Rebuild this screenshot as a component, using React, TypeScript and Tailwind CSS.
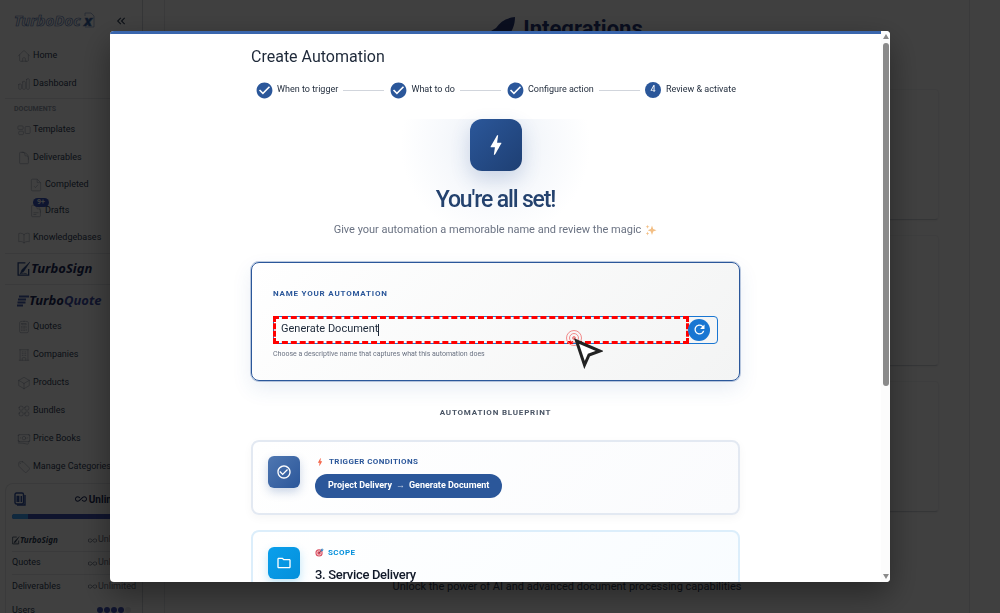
import React, { useState } from 'react';
import {
  HiOutlineHome,
  HiOutlineChartBar,
  HiOutlineDocument,
  HiOutlineDocumentText,
  HiOutlineBookOpen,
  HiOutlineCalculator,
  HiOutlineBuildingOffice,
  HiOutlineCube,
  HiOutlineSquares2X2,
  HiOutlineBanknotes,
  HiOutlineTag,
} from 'react-icons/hi2';
import {
  MdBolt,
  MdCheckCircle,
  MdCheckCircleOutline,
  MdOutlineFolder,
  MdRefresh,
  MdKeyboardDoubleArrowLeft,
  MdAllInclusive,
} from 'react-icons/md';

type IconComponent = React.ComponentType<React.SVGProps<SVGSVGElement>>;

interface NavItem {
  label: string;
  icon: IconComponent;
}

const TemplatesIcon: IconComponent = props => (
  <svg viewBox="0 0 24 24" fill="none" stroke="currentColor" {...props}>
    <rect x="1.500" y="5" width="9" height="6" rx="1.500" />
    <rect x="3" y="14" width="8" height="6" rx="1.500" />
    <rect x="14" y="6" width="8.500" height="12" rx="1.500" />
  </svg>
);

const DocumentCheckIcon: IconComponent = props => (
  <svg viewBox="0 0 24 24" fill="none" stroke="currentColor" {...props}>
    <path d="M14 2H6a2 2 0 0 0-2 2v16a2 2 0 0 0 2 2h12a2 2 0 0 0 2-2V8zM14 2v6h6M8.500 14l2.500 2.500 4.500-5" />
  </svg>
);

const topItems: NavItem[] = [
  { label: 'Home', icon: HiOutlineHome },
  { label: 'Dashboard', icon: HiOutlineChartBar },
];

const documentItems: NavItem[] = [
  { label: 'Templates', icon: TemplatesIcon },
  { label: 'Deliverables', icon: HiOutlineDocument },
];

const quoteItems: NavItem[] = [
  { label: 'Quotes', icon: HiOutlineCalculator },
  { label: 'Companies', icon: HiOutlineBuildingOffice },
  { label: 'Products', icon: HiOutlineCube },
  { label: 'Bundles', icon: HiOutlineSquares2X2 },
  { label: 'Price Books', icon: HiOutlineBanknotes },
  { label: 'Manage Categories', icon: HiOutlineTag },
];

const steps = ['When to trigger', 'What to do', 'Configure action', 'Review & activate'];

const NavLink: React.FC<NavItem> = ({ label, icon: Icon }) => (
  <a href="#" className="flex h-7 items-center gap-[2px] pl-[17px] text-[9px] whitespace-nowrap text-slate-700">
    <Icon className="size-[14px] shrink-0 text-gray-400" strokeWidth={1} />
    {label}
  </a>
);

const SubLink: React.FC<NavItem & { badge?: string }> = ({ label, icon: Icon, badge }) => (
  <a href="#" className="relative flex h-[26px] items-center gap-[2px] pl-[29px] text-[9px] whitespace-nowrap text-slate-700">
    <Icon className="size-[14px] shrink-0 text-gray-400" strokeWidth={1} />
    {label}
    {badge && (
      <span className="absolute top-0 left-[33px] rounded-full bg-[#3a56c0] px-1 text-[7px] leading-[9px] font-bold text-white">
        {badge}
      </span>
    )}
  </a>
);

const SignMark: React.FC<{ className?: string }> = ({ className }) => (
  <svg viewBox="0 0 15 16" className={className} fill="none" stroke="currentColor">
    <path d="M9 1.5H1.2v13h11.3V8" strokeWidth="1.4" />
    <path d="M13.8.5 5.2 8.8l-1.5 4 3.6-2.4z" fill="currentColor" strokeWidth="0.6" />
    <path d="M3 13.2c3-1 5-.8 7.5 0" strokeWidth="0.8" />
  </svg>
);

const Sidebar: React.FC = () => (
  <aside className="flex w-[143px] shrink-0 flex-col border-r border-gray-300">
    <div className="flex h-[42px] shrink-0 items-center justify-between pr-[14px] pl-[14px]">
      <svg viewBox="0 0 82 20" className="h-5 w-[82px]" aria-label="TurboDocx">
        <g fontFamily="Noto Sans" fontStyle="italic" fontWeight="700" fontSize="15" stroke="#5f80b8" strokeWidth="0.7">
          <text x="0" y="15" fill="none">TurboDoc</text>
          <text x="70" y="15" fill="#2b579a">x</text>
        </g>
        <path d="M71 5V2h6l3 3v11h-9" fill="none" stroke="#7f97c0" strokeWidth="0.7" />
      </svg>
      <button type="button" aria-label="Collapse sidebar" className="text-slate-700">
        <MdKeyboardDoubleArrowLeft className="size-[14px]" />
      </button>
    </div>
    <nav className="flex shrink-0 flex-col">
      {topItems.map(item => <NavLink key={item.label} {...item} />)}
      <p className="ml-[5px] h-[18px] border-t border-gray-200 pl-[9px] text-[7px] leading-[20px] font-bold text-gray-400">
        DOCUMENTS
      </p>
      {documentItems.map(item => <NavLink key={item.label} {...item} />)}
      <SubLink label="Completed" icon={DocumentCheckIcon} />
      <SubLink label="Drafts" icon={HiOutlineDocumentText} badge="9+" />
      <NavLink label="Knowledgebases" icon={HiOutlineBookOpen} />
      <a href="#" className="mt-px ml-[5px] flex h-8 items-center border-y border-gray-200 pl-3 font-['Noto_Sans'] text-[13px] font-bold text-[#1c2a58] italic">
        <SignMark className="h-4 w-[14px] text-[#2b4a8a]" />
        TurboSign
      </a>
      <a href="#" className="flex h-7 items-center pt-1 pl-[17px] font-['Noto_Sans'] text-[13px] font-bold text-[#1c2a58] italic">
        <svg viewBox="0 0 12 12" className="size-3 shrink-0" fill="none" stroke="#4a5fb0" strokeWidth="1.8">
          <path d="M2 1.5h10M1 4.5h8M.5 7.500h8M0 10.500h6" />
        </svg>
        Turbo<span className="text-[#3f4ea8]">Quote</span>
      </a>
      {quoteItems.map(item => <NavLink key={item.label} {...item} />)}
    </nav>
    <section className="mt-[2px] ml-[5px] shrink-0 rounded-tl-lg border-t border-l border-gray-200 px-[6px] text-[9px] text-slate-700">
      <div className="flex h-[30px] items-center justify-between text-[#1c2a58]">
        <svg viewBox="0 0 12 14" className="ml-[2px] h-[14px] w-3" fill="none" stroke="#3050a0" strokeWidth="1.4">
          <rect x="1" y="1" width="8.500" height="11" rx="1.500" />
          <path d="M3.200 10V4.500h1.500V10M3 7.500h2M7.300 4v6M11 3v10H3" />
        </svg>
        <span className="flex items-center gap-[2px] pr-1 text-[10px] font-bold">
          <MdAllInclusive className="size-3" />
          Unlimited
        </span>
      </div>
      <div className="flex h-[5px] overflow-hidden rounded-full bg-[#3f51b5]">
        <div className="w-4 bg-[#42a5f5]" />
      </div>
      <ul className="mt-[10px]">
        <li className="flex h-[23px] items-center justify-between border-b border-gray-200">
          <span className="flex items-center font-['Noto_Sans'] text-[8px] font-bold italic">
            <SignMark className="h-[9px] w-2" />
            TurboSign
          </span>
          <span className="flex items-center gap-px text-gray-500"><MdAllInclusive />Unlimited</span>
        </li>
        <li className="flex h-[23px] items-center justify-between border-b border-gray-200">
          Quotes
          <span className="flex items-center gap-px text-gray-500"><MdAllInclusive />Unlimited</span>
        </li>
        <li className="flex h-[23px] items-center justify-between">
          Deliverables
          <span className="flex items-center gap-px text-gray-500"><MdAllInclusive />Unlimited</span>
        </li>
        <li className="flex h-[23px] items-center justify-between leading-3">
          Users
          <span className="flex gap-px pr-[5px]">
            {[0, 1, 2, 3, 4].map(i => (
              <i key={i} className={i < 4 ? 'size-[6px] rounded-full bg-[#3f51b5]' : 'size-[6px] rounded-full bg-gray-200'} />
            ))}
          </span>
        </li>
      </ul>
    </section>
  </aside>
);

const IntegrationsPage: React.FC = () => (
  <div className="mr-[30px] ml-[21px] flex-1 border-x border-gray-200 px-[30px]">
    <h1 className="flex h-[56px] items-center justify-center gap-2 text-[22px] font-bold text-[#28397a]">
      <svg viewBox="0 0 24 24" className="size-6" fill="currentColor">
        <path d="M24 1C15 2 9 6 5 12l-5 3 7 1 3 5 5 2c5-6 9-12 9-22z" />
      </svg>
      Integrations
    </h1>
    <div className="mt-[33px] flex flex-col gap-[15px]">
      {[0, 1, 2].map(i => (
        <div key={i} className="h-[131px] rounded border border-gray-100 border-b-gray-300 shadow-xs" />
      ))}
    </div>
    <p className="mt-[67px] text-center text-[11px] leading-4 text-slate-700">
      Unlock the power of AI and advanced document processing capabilities
    </p>
  </div>
);

const Stepper: React.FC = () => (
  <ol className="mt-3 flex items-center px-1 text-[9px] text-gray-800">
    {steps.map((step, index) => (
      <React.Fragment key={step}>
        {index > 0 && <li aria-hidden="true" className="mx-[5px] h-px flex-1 bg-gray-300" />}
        {index < steps.length - 1 ? (
          <li className="flex items-center gap-[3px] whitespace-nowrap">
            <MdCheckCircle className="size-[19px] text-[#2b579a]" />
            {step}
          </li>
        ) : (
          <li className="flex items-center gap-[5px] whitespace-nowrap">
            <span className="flex size-4 items-center justify-center rounded-full bg-[#2b579a] text-[9px] text-white">
              {index + 1}
            </span>
            {step}
          </li>
        )}
      </React.Fragment>
    ))}
  </ol>
);

const Sparkles: React.FC = () => (
  <svg viewBox="0 0 12 12" className="size-3" fill="#f3bf85">
    <path d="M7 1.500 8.200 5l3.300 1.200L8.200 7.400 7 11 5.800 7.400 2.700 6.200 5.800 5z" />
    <path d="M2.500.8 3 2.300l1.500.5L3 3.300l-.5 1.500L2 3.300.6 2.800 2 2.300zM2.500 7.500 3 9l1.300.5L3 10l-.5 1.500L2 10 .8 9.500 2 9z" />
  </svg>
);

const TargetMark: React.FC = () => (
  <svg viewBox="0 0 10 10" className="size-[9px]" fill="none">
    <circle cx="4.500" cy="5.500" r="4" fill="#d94b5e" />
    <circle cx="4.500" cy="5.500" r="2.400" stroke="#fff" strokeWidth="0.8" />
    <path d="m4.500 5.500 3-3" stroke="#445" strokeWidth="0.8" />
    <path d="M6.500 3.500V1.800L8.200.2l.2 1.400 1.400.2-1.600 1.700z" fill="#3b88c3" />
  </svg>
);

const ReviewDialog: React.FC = () => {
  const [name, setName] = useState('Generate Document');

  return (
    <div
      role="dialog"
      aria-modal="true"
      aria-labelledby="dialog-title"
      className="flex h-[90vh] w-full max-w-[780px] overflow-hidden rounded-sm bg-white shadow-[0_12px_32px_rgba(0,0,0,0.4)]"
    >
      <div className="min-w-0 flex-1 overflow-hidden border-t-[3px] border-[#3a66ad]">
        <div className="mx-auto max-w-[489px]">
          <h2 id="dialog-title" className="pt-[11px] text-base leading-6 text-gray-800">Create Automation</h2>
          <Stepper />

          <div className="mt-[19px] flex flex-col items-center bg-[radial-gradient(circle_at_50%_26px,#eaeff6_0,#f7f9fc_55px,#ffffff_95px)] text-center">
            <div className="flex size-[52px] items-center justify-center rounded-xl bg-linear-135 from-[#2b579a] to-[#1e3f73] shadow-[0_8px_20px_rgba(43,87,154,0.2)]">
              <MdBolt className="size-[26px] text-white" />
            </div>
            <h3 className="mt-[13px] text-[23px] leading-8 font-medium tracking-tighter text-[#24426e]">You're all set!</h3>
            <p className="mt-1 flex items-center gap-1 text-[11px] leading-5 text-gray-500">
              Give your automation a memorable name and review the magic
              <Sparkles />
            </p>
          </div>

          <section className="relative mt-[22px] rounded-lg border border-[#2b579a] bg-linear-135 from-white to-[#f3f4f4] px-[21px] pt-[23px] pb-5 shadow-[0_8px_20px_rgba(43,87,154,0.1)] ring-1 ring-[#2b579a]/30">
            <label htmlFor="automation-name" className="block text-[8px] leading-4 font-bold tracking-widest text-[#2b579a]">
              NAME YOUR AUTOMATION
            </label>
            <div className="mt-[14px] flex h-7 items-stretch rounded border border-[#1976d2]">
              <div className="-m-px flex flex-1 items-center border-3 border-dashed border-[#ff0000] pl-[5px]">
                <input
                  id="automation-name"
                  value={name}
                  onChange={e => setName(e.target.value)}
                  className="[field-sizing:content] text-[11px] text-gray-800 outline-none"
                />
                <span className="h-3 w-px bg-gray-800" />
              </div>
              <div className="flex w-[29px] items-center">
                <button type="button" aria-label="Regenerate name" className="flex size-[22px] items-center justify-center rounded-full bg-[#1976d2] text-white">
                  <MdRefresh className="size-[15px]" />
                </button>
              </div>
            </div>
            <p className="mt-1 text-[7px] leading-3 text-gray-500">
              Choose a descriptive name that captures what this automation does
            </p>
            <svg viewBox="0 0 38 40" className="absolute top-[66px] left-[313px] h-10 w-[38px]" fill="none">
              <g stroke="#f28b8b">
                <circle cx="9" cy="9" r="7.500" />
                <circle cx="9" cy="9" r="4.500" />
                <circle cx="9" cy="9" r="1.500" fill="#f28b8b" />
              </g>
              <path d="m11.500 12 23.500 10-11 4-4.500 10z" fill="#fff" stroke="#222" strokeWidth="3" />
            </svg>
          </section>

          <h4 className="mt-6 text-center text-[8px] leading-4 font-bold tracking-widest text-gray-600">AUTOMATION BLUEPRINT</h4>

          <section className="mt-[19px] flex gap-[15px] rounded-lg border-2 border-[#e3e9f2] bg-linear-135 from-white to-[#fafbfd] px-[15px] pt-[14px] pb-[15px] shadow-[0_3px_10px_rgba(0,0,0,0.04)]">
            <div className="flex size-8 items-center justify-center rounded-md bg-linear-135 from-[#4f77b1] to-[#2b579a] shadow-[0_4px_10px_rgba(43,87,154,0.25)]">
              <MdCheckCircleOutline className="size-4 text-white" />
            </div>
            <div>
              <h5 className="flex items-center gap-1 text-[8px] leading-3 font-bold tracking-wider text-[#2b579a]">
                <MdBolt className="size-[10px] text-[#f4664a]" />
                TRIGGER CONDITIONS
              </h5>
              <p className="mt-[6px] flex h-6 items-center gap-1 rounded-full bg-[#2b579a] px-[13px] text-[9px] font-bold text-white">
                Project Delivery <span className="font-normal opacity-70">→</span> Generate Document
              </p>
            </div>
          </section>

          <section className="mt-[15px] flex gap-[15px] rounded-lg border-2 border-[#dceefb] bg-linear-135 from-white to-[#f8fcff] px-[15px] pt-[15px] pb-[14px]">
            <div className="flex size-8 items-center justify-center rounded-md bg-linear-135 from-[#0a9fec] to-[#0590db] shadow-[0_4px_10px_rgba(3,155,229,0.25)]">
              <MdOutlineFolder className="size-4 text-white" />
            </div>
            <div>
              <h5 className="flex items-center gap-1 text-[8px] leading-3 font-bold tracking-wider text-[#0590db]">
                <TargetMark />
                SCOPE
              </h5>
              <p className="mt-[6px] text-[13px] leading-5 font-medium tracking-tight text-gray-900">3. Service Delivery</p>
            </div>
          </section>
        </div>
      </div>

      {/* Scroll track */}
      <div className="flex w-[9px] flex-col items-center gap-1 bg-[#fcfcfc] py-[3px]" aria-hidden="true">
        <svg viewBox="0 0 6 5" className="h-[5px] w-[6px]" fill="#8a8a8a"><path d="M3 0 6 5H0z" /></svg>
        <div className="w-[6px] flex-19 rounded-full bg-[#8a8a8a]" />
        <div className="flex-10" />
        <svg viewBox="0 0 6 5" className="h-[5px] w-[6px]" fill="#8a8a8a"><path d="M0 0h6L3 5z" /></svg>
      </div>
    </div>
  );
};

const App: React.FC = () => (
  <div className="relative h-screen overflow-hidden bg-white font-[Roboto,sans-serif]">
    <div className="flex h-full">
      <Sidebar />
      <IntegrationsPage />
    </div>
    <div className="fixed inset-0 flex items-center justify-center bg-black/75">
      <ReviewDialog />
    </div>
  </div>
);

export default App;
